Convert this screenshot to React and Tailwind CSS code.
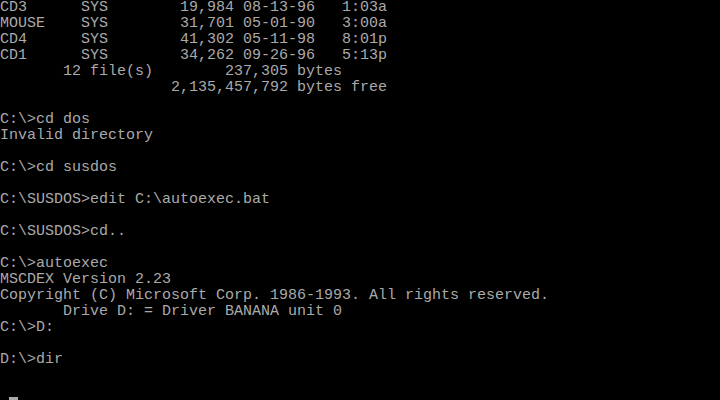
import React from "react";

const lines = [
  "CD3      SYS        19,984 08-13-96   1:03a",
  "MOUSE    SYS        31,701 05-01-90   3:00a",
  "CD4      SYS        41,302 05-11-98   8:01p",
  "CD1      SYS        34,262 09-26-96   5:13p",
  "       12 file(s)        237,305 bytes",
  "                   2,135,457,792 bytes free",
  "",
  "C:\\>cd dos",
  "Invalid directory",
  "",
  "C:\\>cd susdos",
  "",
  "C:\\SUSDOS>edit C:\\autoexec.bat",
  "",
  "C:\\SUSDOS>cd..",
  "",
  "C:\\>autoexec",
  "MSCDEX Version 2.23",
  "Copyright (C) Microsoft Corp. 1986-1993. All rights reserved.",
  "       Drive D: = Driver BANANA unit 0",
  "C:\\>D:",
  "",
  "D:\\>dir",
  "",
];

export default function App() {
  return (
    <div className="w-[720px] h-[400px] bg-black overflow-hidden text-[#aaaaaa] font-['Liberation_Mono',monospace] text-[15px] leading-[16px]">
      {lines.map((l, i) => (
        <div key={i} className="h-4 whitespace-pre">
          {l}
        </div>
      ))}
      <div className="h-4 flex items-end">
        <div className="ml-[9px] w-[9px] h-[3px] bg-[#aaaaaa]" />
      </div>
    </div>
  );
}
